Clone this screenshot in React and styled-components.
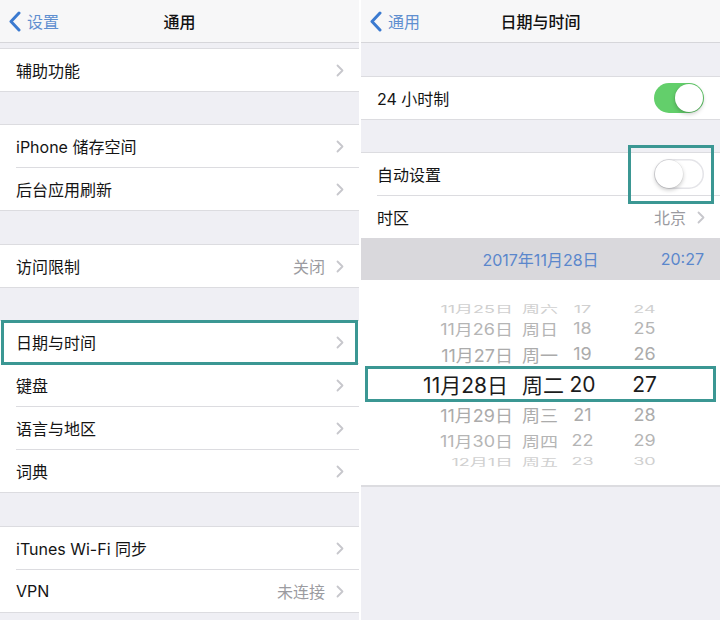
import React from "react";
import styled, { createGlobalStyle } from "styled-components";

const TEAL = "#3b9793";
const GRAY_BG = "#efeff4";
const SEP = "#dcdce0";

const GlobalStyle = createGlobalStyle`
  body {
    margin: 0;
    background: #fff;
    font-family: Inter, "Noto Sans CJK SC", sans-serif;
    -webkit-font-smoothing: antialiased;
  }
`;

const Page = styled.div`
  width: 720px;
  height: 620px;
  display: grid;
  grid-template-columns: 359px 359px;
  column-gap: 2px;
  overflow: hidden;
`;

const Screen = styled.div`
  background: ${GRAY_BG};
  display: flex;
  flex-direction: column;
  height: 620px;
  overflow: hidden;
`;

const NavBar = styled.div`
  height: 42px;
  flex-shrink: 0;
  background: #f7f7f8;
  border-bottom: 1px solid #d6d6da;
  display: grid;
  grid-template-columns: 1fr auto 1fr;
  align-items: center;
`;

const Back = styled.div`
  display: flex;
  align-items: center;
  gap: 6px;
  padding-left: 8px;
  color: #5f8fd0;
  font-size: 16px;
`;

const Title = styled.div`
  font-size: 16px;
  font-weight: 500;
  color: #111;
`;

const Spacer = styled.div`
  height: ${(p) => p.$h}px;
  flex-shrink: 0;
`;

const Group = styled.div`
  position: relative;
  background: #fff;
  border-top: 1px solid ${SEP};
  border-bottom: 1px solid ${SEP};
  flex-shrink: 0;
`;

// teal annotation frame drawn over the toggle
const Frame = styled.div`
  position: absolute;
  top: -8px;
  right: 6px;
  width: 86px;
  height: 59px;
  box-sizing: border-box;
  border: 3px solid ${TEAL};
  pointer-events: none;
  z-index: 3;
`;

const Row = styled.div`
  position: relative;
  display: flex;
  padding-left: 16px;
  background: #fff;

  ${(p) =>
    p.$marked &&
    `
    &::after {
      content: "";
      position: absolute;
      top: -1px;
      bottom: -1px;
      left: 1px;
      right: 1px;
      border: 3px solid ${TEAL};
      pointer-events: none;
      z-index: 1;
    }
  `}
`;

const RowInner = styled.div`
  flex: 1;
  height: 42px;
  display: flex;
  align-items: center;
  justify-content: space-between;
  padding-right: ${(p) => (p.$toggle ? 16 : 15)}px;
  border-bottom: ${(p) => (p.$last ? "none" : `1px solid ${SEP}`)};
`;

const Label = styled.span`
  font-size: 16px;
  color: #141414;
`;

const Accessory = styled.div`
  display: flex;
  align-items: center;
  gap: 11px;
`;

const Value = styled.span`
  font-size: 16px;
  color: #9b9ba0;
`;

const Switch = styled.div`
  width: 50px;
  height: 30px;
  border-radius: 16px;
  box-sizing: border-box;
  padding: 1px;
  display: flex;
  justify-content: ${(p) => (p.$on ? "flex-end" : "flex-start")};
  background: ${(p) => (p.$on ? "#63cf6b" : "#fff")};
  box-shadow: ${(p) => (p.$on ? "none" : "inset 0 0 0 1.5px #e4e4e8")};
`;

const Knob = styled.div`
  width: 28px;
  height: 28px;
  border-radius: 50%;
  background: #fff;
  box-shadow: 0 2px 4px rgba(0, 0, 0, 0.22), 0 0 0 0.5px rgba(0, 0, 0, 0.08);
`;

const DateBar = styled.div`
  height: 42px;
  flex-shrink: 0;
  background: #d9d8dc;
  display: grid;
  grid-template-columns: 1fr auto 1fr;
  align-items: center;
  color: #5b87cc;
  font-size: 16px;
`;

const DateTime = styled.span`
  justify-self: end;
  padding-right: 16px;
`;

const Picker = styled.div`
  flex-shrink: 0;
  height: 206px;
  box-sizing: border-box;
  padding-top: 17px;
  background: #fff;
  border-bottom: 1px solid ${SEP};
`;

const PickerRow = styled.div`
  position: relative;
  height: ${(p) => p.$h}px;
  display: grid;
  grid-template-columns: 152px 49px 41px 63px;
  align-items: center;
  font-size: ${(p) => p.$size}px;
  color: ${(p) => p.$color};
  transform: scaleY(${(p) => p.$scale});
  white-space: nowrap;

  ${(p) =>
    p.$selected &&
    `
    &::after {
      content: "";
      position: absolute;
      top: -1px;
      bottom: -1px;
      left: 4px;
      right: 4px;
      border: 3px solid ${TEAL};
      pointer-events: none;
    }
  `}
`;

const DayCell = styled.span`
  text-align: right;
  padding-right: ${(p) => (p.$selected ? 5 : 0)}px;
`;

const WeekCell = styled.span`
  padding-left: 9px;
`;

const HourCell = styled.span`
  text-align: center;
`;

const MinuteCell = styled.span`
  text-align: center;
  padding-left: 20px;
`;

const Chevron = () => (
  <svg width="8" height="13" viewBox="0 0 8 13">
    <polyline
      points="1.5,1.5 6.5,6.5 1.5,11.5"
      fill="none"
      stroke="#c7c7cc"
      strokeWidth="1.8"
      strokeLinecap="round"
      strokeLinejoin="round"
    />
  </svg>
);

const BackChevron = () => (
  <svg width="13" height="21" viewBox="0 0 13 21">
    <polyline
      points="11,2 3,10.5 11,19"
      fill="none"
      stroke="#3b7ad0"
      strokeWidth="3"
      strokeLinecap="round"
      strokeLinejoin="round"
    />
  </svg>
);

const Nav = ({ back, title }) => (
  <NavBar>
    <Back>
      <BackChevron />
      {back}
    </Back>
    <Title>{title}</Title>
    <div />
  </NavBar>
);

const Cell = ({ label, value, last, marked }) => (
  <Row $marked={marked}>
    <RowInner $last={last}>
      <Label>{label}</Label>
      <Accessory>
        {value && <Value>{value}</Value>}
        <Chevron />
      </Accessory>
    </RowInner>
  </Row>
);

const ToggleCell = ({ label, on, last }) => (
  <Row>
    <RowInner $last={last} $toggle>
      <Label>{label}</Label>
      <Switch $on={on}>
        <Knob />
      </Switch>
    </RowInner>
  </Row>
);

const pickerRows = [
  { day: "11月25日", week: "周六", hour: "17", min: "24", h: 18, size: 18, color: "#d0d0d0", scale: 0.6 },
  { day: "11月26日", week: "周日", hour: "18", min: "25", h: 25, size: 18, color: "#b5b5b5", scale: 0.85 },
  { day: "11月27日", week: "周一", hour: "19", min: "26", h: 27, size: 18, color: "#ababab", scale: 0.95 },
  { day: "11月28日", week: "周二", hour: "20", min: "27", h: 34, size: 21, color: "#1c1c1c", scale: 1, selected: true },
  { day: "11月29日", week: "周三", hour: "21", min: "28", h: 26, size: 18, color: "#ababab", scale: 0.95 },
  { day: "11月30日", week: "周四", hour: "22", min: "29", h: 24, size: 18, color: "#b5b5b5", scale: 0.85 },
  { day: "12月1日", week: "周五", hour: "23", min: "30", h: 14, size: 18, color: "#d0d0d0", scale: 0.55 },
];

export default function App() {
  return (
    <>
      <GlobalStyle />
      <Page>
        <Screen>
          <Nav back="设置" title="通用" />
          <Spacer $h={5} />
          <Group>
            <Cell label="辅助功能" last />
          </Group>
          <Spacer $h={32} />
          <Group>
            <Cell label="iPhone 储存空间" />
            <Cell label="后台应用刷新" last />
          </Group>
          <Spacer $h={33} />
          <Group>
            <Cell label="访问限制" value="关闭" last />
          </Group>
          <Spacer $h={32} />
          <Group>
            <Cell label="日期与时间" marked />
            <Cell label="键盘" />
            <Cell label="语言与地区" />
            <Cell label="词典" last />
          </Group>
          <Spacer $h={33} />
          <Group>
            <Cell label="iTunes Wi-Fi 同步" />
            <Cell label="VPN" value="未连接" last />
          </Group>
        </Screen>

        <Screen>
          <Nav back="通用" title="日期与时间" />
          <Spacer $h={33} />
          <Group>
            <ToggleCell label="24 小时制" on last />
          </Group>
          <Spacer $h={32} />
          <Group>
            <ToggleCell label="自动设置" />
            <Cell label="时区" value="北京" last />
            <DateBar>
              <span />
              <span>2017年11月28日</span>
              <DateTime>20:27</DateTime>
            </DateBar>
            <Picker>
              {pickerRows.map((r) => (
                <PickerRow
                  key={r.day}
                  $h={r.h}
                  $size={r.size}
                  $color={r.color}
                  $scale={r.scale}
                  $selected={r.selected}
                >
                  <DayCell $selected={r.selected}>{r.day}</DayCell>
                  <WeekCell>{r.week}</WeekCell>
                  <HourCell>{r.hour}</HourCell>
                  <MinuteCell>{r.min}</MinuteCell>
                </PickerRow>
              ))}
            </Picker>
            <Frame />
          </Group>
        </Screen>
      </Page>
    </>
  );
}
